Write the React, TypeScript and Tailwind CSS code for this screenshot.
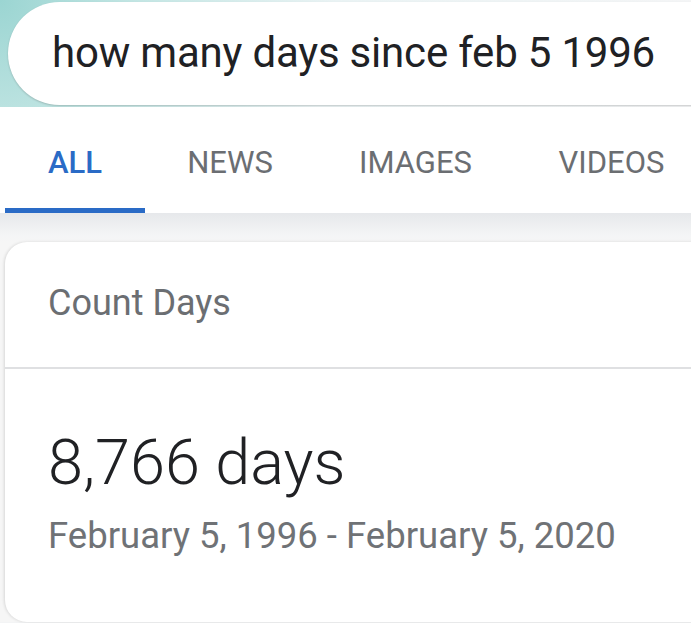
import React from "react"

const tabs = [
  { label: "ALL", active: true, w: "w-[140px]" },
  { label: "NEWS", w: "w-[170px]" },
  { label: "IMAGES", w: "w-[201px]" },
  { label: "VIDEOS", w: "w-[191px]" },
]

const App = () => {
  return (
    <div className="w-[691px] h-[623px] overflow-hidden bg-[#f3f4f5] font-['Roboto',sans-serif]">
      {/* search header */}
      <div className="h-[107px] pt-[2px] pl-[8px] bg-[radial-gradient(circle_at_0%_0%,#9bd5d2_0%,#c4e6e4_20%,#eaf3f4_48%,#f4f5f6_100%)]">
        <div className="h-[103px] -mr-[60px] rounded-l-[52px] bg-white shadow-[0_1px_2px_rgba(0,0,0,0.18)] flex items-center pl-[44px]">
          <span className="text-[42px] text-[#202124] tracking-[-0.2px] leading-none mt-[-2px]">
            how many days since feb 5 1996
          </span>
        </div>
      </div>

      {/* tabs */}
      <div className="h-[106px] bg-white flex items-end pl-[5px]">
        {tabs.map((t) => (
          <div key={t.label} className={`flex flex-col items-center shrink-0 ${t.w}`}>
            <span
              className={`text-[31px] leading-none mb-[30px] ${t.active ? "text-[#2a6bc6] font-medium" : "text-[#6b6e72]"}`}
            >
              {t.label}
            </span>
            <div className={`h-[5px] w-full ${t.active ? "bg-[#2a6bc6]" : "bg-transparent"}`} />
          </div>
        ))}
      </div>

      {/* shadow band + card */}
      <div className="bg-[linear-gradient(to_bottom,#e6e8eb_0px,#f4f5f6_22px,#f6f6f6_30px)] pt-[29px] pl-[5px]">
        <div className="bg-white rounded-l-[22px] -mr-[40px] shadow-[-1px_0_3px_rgba(0,0,0,0.12)] h-[380px]">
          <div className="h-[127px] flex items-center pl-[43px] border-b-2 border-[#dfe0e2]">
            <span className="text-[36px] text-[#6b6e72] leading-none mt-[-4px]">Count Days</span>
          </div>
          <div className="pl-[43px] pt-[62px]">
            <div className="text-[63px] font-light text-[#202124] leading-none">8,766 days</div>
            <div className="text-[36.5px] text-[#6f7276] leading-none mt-[24px]">
              February 5, 1996 - February 5, 2020
            </div>
          </div>
        </div>
      </div>
    </div>
  )
}

export default App
